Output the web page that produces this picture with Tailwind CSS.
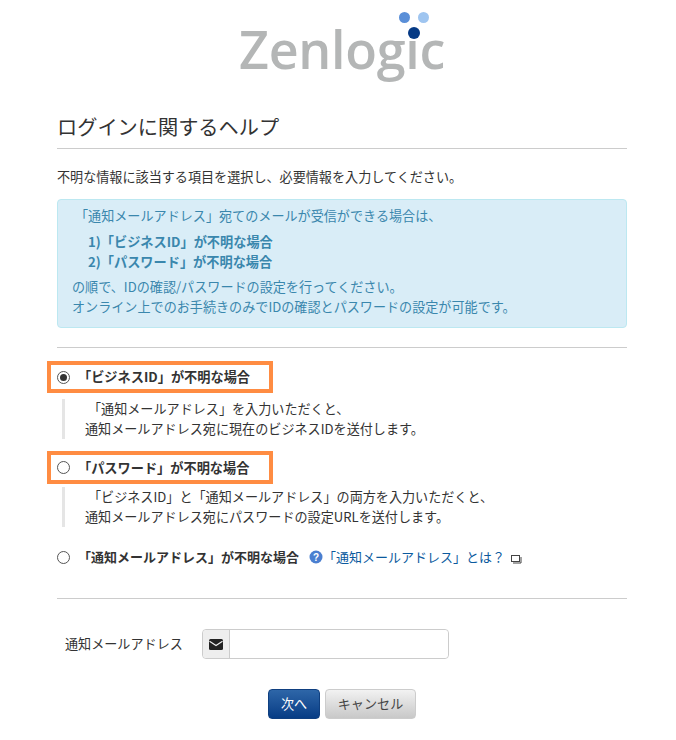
<!DOCTYPE html>
<html lang="ja"><head><meta charset="utf-8">
<script src="https://cdn.jsdelivr.net/npm/@tailwindcss/browser@4"></script>
</head>
<body class="bg-white">
<div class="w-[676px] h-[740px] overflow-hidden font-['Noto_Sans_CJK_JP','Noto_Sans',sans-serif] text-[13.1px] text-[#333] pl-[57px] pr-[49px]">
  <div class="h-[100px] relative">
    <div class="absolute left-[182px] top-[14px] text-[52px] leading-[70px] font-semibold text-[#b4b6b6] font-['Open_Sans',sans-serif] tracking-[-0.3px]">Zenlogic</div>
    <span class="absolute left-[342px] top-[12px] w-[11px] h-[11px] rounded-full bg-[#5a8fd8]"></span>
    <span class="absolute left-[361px] top-[12px] w-[11px] h-[11px] rounded-full bg-[#9fc5f0]"></span>
    <span class="absolute left-[351px] top-[27px] w-[12px] h-[12px] rounded-full bg-[#063a85] ring-2 ring-white"></span>
  </div>
  <h1 class="h-[49px] pt-[11px] border-b border-[#ccc] text-[20.2px] leading-[32px] text-[#333] font-normal">ログインに関するヘルプ</h1>
  <p class="mt-[19px] leading-[18px] h-[18px]">不明な情報に該当する項目を選択し、必要情報を入力してください。</p>
  <div class="mt-[13px] h-[129px] rounded border border-[#bce8f1] bg-[#d9edf7] text-[#3a87ad] px-[14px] pt-[7px]">
    <p class="pl-[3px] leading-[18px]">「通知メールアドレス」宛てのメールが受信ができる場合は、</p>
    <p class="pl-[16px] mt-[7px] leading-[20px] font-bold text-[13.2px]">1)「ビジネスID」が不明な場合</p>
    <p class="pl-[16px] leading-[20px] font-bold text-[13.2px]">2)「パスワード」が不明な場合</p>
    <p class="mt-[5px] leading-[20px]">の順で、IDの確認/パスワードの設定を行ってください。</p>
    <p class="leading-[20px]">オンライン上でのお手続きのみでIDの確認とパスワードの設定が可能です。</p>
  </div>
  <div class="mt-[19px] border-t border-[#ccc]"></div>

  <div class="mt-[13px] -ml-[10px] w-[226px] h-[32px] border-[4px] border-[#ff8c42] flex items-center pl-[6px]">
    <span class="w-[13px] h-[13px] rounded-full border border-[#555] flex items-center justify-center"><span class="w-[7px] h-[7px] rounded-full bg-[#333]"></span></span>
    <span class="ml-[8px] font-bold leading-[18px] text-[13.2px]">「ビジネスID」が不明な場合</span>
  </div>
  <div class="mt-[6px] ml-[5px] h-[40px] border-l-[3px] border-[#e5e5e5] pl-[20px] leading-[20px]">
    <p class="pl-[3px]">「通知メールアドレス」を入力いただくと、</p>
    <p>通知メールアドレス宛に現在のビジネスIDを送付します。</p>
  </div>
  <div class="mt-[12px] -ml-[10px] w-[226px] h-[33px] border-[4px] border-[#ff8c42] flex items-center pl-[6px]">
    <span class="w-[13px] h-[13px] rounded-full border border-[#555]"></span>
    <span class="ml-[8px] font-bold leading-[18px] text-[13.2px]">「パスワード」が不明な場合</span>
  </div>
  <div class="mt-[3px] ml-[5px] h-[40px] border-l-[3px] border-[#e5e5e5] pl-[20px] leading-[20px]">
    <p class="pl-[3px]">「ビジネスID」と「通知メールアドレス」の両方を入力いただくと、</p>
    <p>通知メールアドレス宛にパスワードの設定URLを送付します。</p>
  </div>
  <div class="mt-[20px] h-[20px] flex items-center">
    <span class="w-[13px] h-[13px] rounded-full border border-[#555]"></span>
    <span class="ml-[8px] font-bold leading-[18px] text-[13px]">「通知メールアドレス」が不明な場合</span>
    <svg class="ml-[10px]" width="14" height="14" viewBox="0 0 14 14"><circle cx="7" cy="7" r="6.5" fill="#4a7fd0"/><text x="7" y="10.5" text-anchor="middle" font-size="10" font-weight="700" fill="#fff" font-family="Liberation Sans">?</text></svg>
    <span class="text-[#0b5a9e] leading-[18px] text-[13px]">「通知メールアドレス」とは？</span>
    <svg class="ml-[5px] mt-[3px]" width="12" height="10" viewBox="0 0 12 10" fill="none" stroke="#444"><rect x="1.5" y="1.5" width="8" height="6"/><path d="M11 3v6H3" /></svg>
  </div>
  <div class="mt-[31px] border-t border-[#ccc]"></div>
  <div class="mt-[30px] flex items-center h-[30px]">
    <label class="ml-[8px] w-[137px] leading-[18px]">通知メールアドレス</label>
    <div class="w-[247px] h-[30px] flex border border-[#ccc] rounded">
      <span class="w-[27px] bg-[#eee] border-r border-[#ccc] rounded-l flex items-center justify-center">
        <svg width="14" height="11" viewBox="0 0 14 11"><rect width="14" height="11" rx="1.5" fill="#222"/><path d="M0.5 2.2 7 6.5l6.5-4.3" fill="none" stroke="#eee" stroke-width="1.2"/></svg>
      </span>
      <span class="flex-1 bg-white rounded-r"></span>
    </div>
  </div>
  <div class="mt-[30px] flex justify-center gap-[5px]">
    <button class="w-[52px] h-[30px] rounded border border-[#0f3f80] bg-gradient-to-b from-[#2e66a8] to-[#063c85] text-white leading-[18px]">次へ</button>
    <button class="w-[91px] h-[30px] rounded border border-[#ccc] bg-gradient-to-b from-[#f2f2f2] to-[#c8c8c8] text-[#444] leading-[18px]">キャンセル</button>
  </div>
</div>
</body></html>
